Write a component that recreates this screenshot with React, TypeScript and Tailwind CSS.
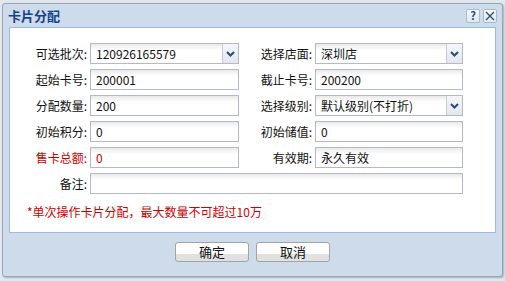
import type { ReactNode } from "react";

const FONT = {
  fontFamily: '"Noto Sans CJK SC", "Liberation Sans", sans-serif',
};

function Label({ children, red, wide }: { children: ReactNode; red?: boolean; wide?: boolean }) {
  return (
    <div
      className={`${wide ? "w-[80px]" : "w-[76px]"} shrink-0 pr-[3px] text-right text-[12px] leading-[21px] ${
        red ? "text-[#cc0000]" : "text-[#111]"
      }`}
    >
      {children}
    </div>
  );
}

function Field({
  value,
  select,
  red,
  width,
}: {
  value?: string;
  select?: boolean;
  red?: boolean;
  width: string;
}) {
  return (
    <div
      className={`${width} flex h-[21px] shrink-0 border border-[#b5b8c8] bg-[linear-gradient(#e9e9e9,#fff_6px)]`}
    >
      <div
        className={`min-w-0 flex-1 truncate pl-[5px] text-[12px] leading-[19px] ${
          red ? "text-[#cc0000]" : "text-[#111]"
        }`}
      >
        {value}
      </div>
      {select && (
        <div className="flex w-[16px] items-center justify-center border-l border-[#c6cbd6] bg-[linear-gradient(#f4f6f9,#e3e8ef)]">
          <svg width="9" height="6" viewBox="0 0 9 6">
            <path d="M1 1 L4.5 4.5 L8 1" fill="none" stroke="#2c4a75" strokeWidth="2" />
          </svg>
        </div>
      )}
    </div>
  );
}

function Row({ children }: { children: ReactNode }) {
  return <div className="flex items-center">{children}</div>;
}

function ToolButton({ children }: { children: ReactNode }) {
  return (
    <div className="flex h-[14px] w-[14px] items-center justify-center rounded-[2px] border border-[#a7bbd6] bg-[linear-gradient(#f7f9fc,#dfe7f1)]">
      {children}
    </div>
  );
}

function Button({ children }: { children: ReactNode }) {
  return (
    <button className="h-[20px] w-[74px] rounded-[3px] border border-[#a3a3a3] bg-[linear-gradient(#fff_0%,#fff_62%,#e1e1e1_62%,#e1e1e1_100%)] text-[13px] leading-[18px] text-[#111]">
      {children}
    </button>
  );
}

export default function App() {
  return (
    <div className="h-[281px] w-[505px] bg-[#e3e8ee] pl-[2px] pt-[3px]" style={FONT}>
      <div className="flex h-[274px] w-[501px] flex-col rounded-[3px] border border-[#98a6b8] bg-[#cedbea] shadow-[1px_1px_2px_rgba(0,0,0,0.25)]">
        <header className="flex h-[23px] shrink-0 items-center justify-between pl-[5px] pr-[5px]">
          <span className="text-[13px] font-bold text-[#15428b]">卡片分配</span>
          <div className="flex gap-[3px]">
            <ToolButton>
              <span className="text-[11px] font-bold leading-none text-[#2c4a75]">?</span>
            </ToolButton>
            <ToolButton>
              <svg width="10" height="10" viewBox="0 0 10 10">
                <path d="M1 1 L9 9 M9 1 L1 9" stroke="#2c4a75" strokeWidth="1.3" />
              </svg>
            </ToolButton>
          </div>
        </header>

        <section className="mx-[6px] flex h-[206px] flex-col gap-[5px] border border-[#99bbe8] bg-white pt-[15px]">
          <Row>
            <Label wide>可选批次:</Label>
            <Field width="w-[149px]" value="120926165579" select />
            <Label>选择店面:</Label>
            <Field width="w-[148px]" value="深圳店" select />
          </Row>
          <Row>
            <Label wide>起始卡号:</Label>
            <Field width="w-[149px]" value="200001" />
            <Label>截止卡号:</Label>
            <Field width="w-[148px]" value="200200" />
          </Row>
          <Row>
            <Label wide>分配数量:</Label>
            <Field width="w-[149px]" value="200" />
            <Label>选择级别:</Label>
            <Field width="w-[148px]" value="默认级别(不打折)" select />
          </Row>
          <Row>
            <Label wide>初始积分:</Label>
            <Field width="w-[149px]" value="0" />
            <Label>初始储值:</Label>
            <Field width="w-[148px]" value="0" />
          </Row>
          <Row>
            <Label wide red>
              售卡总额:
            </Label>
            <Field width="w-[149px]" value="0" red />
            <Label>有效期:</Label>
            <Field width="w-[148px]" value="永久有效" />
          </Row>
          <Row>
            <Label wide>备注:</Label>
            <Field width="w-[373px]" />
          </Row>
          <p className="pl-[17px] pt-[5px] text-[12px] leading-[16px] text-[#cc0000]">
            *单次操作卡片分配，最大数量不可超过10万
          </p>
        </section>

        <footer className="flex justify-center gap-[7px] pt-[9px]">
          <Button>确定</Button>
          <Button>取消</Button>
        </footer>
      </div>
    </div>
  );
}
